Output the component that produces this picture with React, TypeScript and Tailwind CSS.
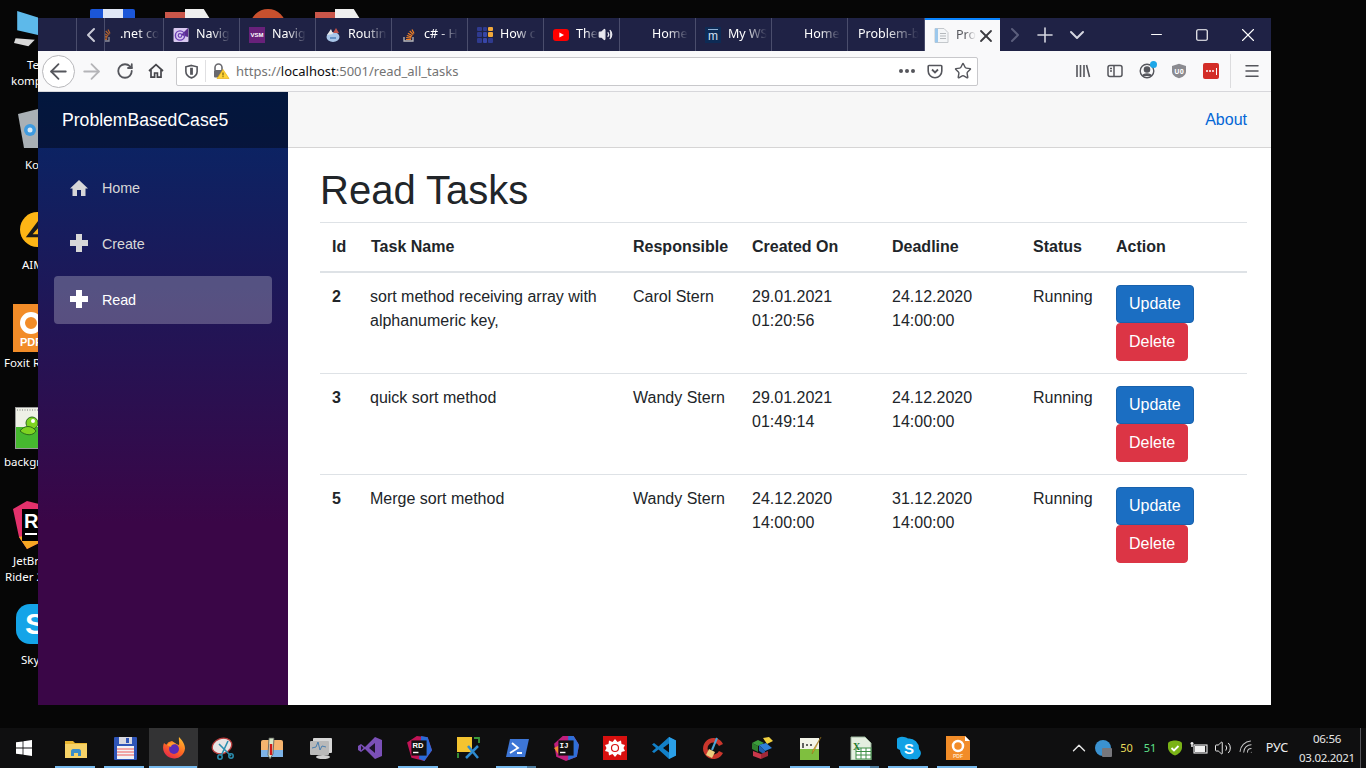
import React from 'react';
import { ArrowLeft, ArrowRight, RotateCw, ChevronLeft, ChevronRight, ChevronDown, ChevronUp, Plus, Minus, Square, X, Star, Menu, Volume2, Wifi } from 'lucide-react';

const UI_FONT = "font-['Noto_Sans','Open_Sans',sans-serif]";
const FADE = '[mask-image:linear-gradient(to_right,#000_45%,transparent)]';

const StackIcon = () => (
  <svg viewBox="0 0 16 16" className="w-4 h-4 shrink-0">
    <path d="M3 10v4h9v-4" fill="none" stroke="#bcbbbb" strokeWidth="1.3" />
    <path d="M5 12.5h5M5.2 10.5l5 .6M5.8 8.5l4.8 1.4M6.9 6.3l4.4 2.4M8.7 4l3.6 3.6M11 2.4l2 4.2" fill="none" stroke="#f48024" strokeWidth="1.2" />
  </svg>
);
const NavigIcon = () => (
  <svg viewBox="0 0 16 16" className="w-4 h-4">
    <rect x="0.5" y="1" width="15" height="14" rx="1" fill="#d9c9f0" />
    <path d="M15 1 L8 8 L15 10z" fill="#5c2d91" />
    <circle cx="7" cy="8.5" r="4.6" fill="none" stroke="#6b3fb4" strokeWidth="1.4" />
    <circle cx="7" cy="8.5" r="1.8" fill="none" stroke="#6b3fb4" strokeWidth="1.2" />
  </svg>
);
const VsmIcon = () => (
  <svg viewBox="0 0 16 16" className="w-4 h-4">
    <rect width="16" height="16" fill="#68217a" />
    <text x="8" y="10" textAnchor="middle" fontSize="6" fontWeight="700" fill="#fff" fontFamily="Liberation Sans">VSM</text>
  </svg>
);
const RoutingIcon = () => (
  <svg viewBox="0 0 16 16" className="w-4 h-4">
    <ellipse cx="8" cy="10" rx="6.5" ry="5" fill="#a9c6e8" />
    <path d="M2 8 L6 2 L8 7z" fill="#e8e8e8" />
    <path d="M8 6 L11 1 L14 6z" fill="#c0524a" />
    <path d="M5 11h6" stroke="#4f7fb8" strokeWidth="1.5" />
  </svg>
);
const GridIcon = () => (
  <div className="w-4 h-4 grid grid-cols-3 gap-px">
    {['#2f3a8f', '#2f3a8f', '#f2a93b', '#2f3a8f', '#3846a8', '#f2a93b', '#2f3a8f', '#3846a8', '#2f3a8f'].map((c, i) => (
      <div key={i} className="rounded-[1px]" style={{ backgroundColor: c }} />
    ))}
  </div>
);
const YoutubeIcon = () => (
  <svg viewBox="0 0 16 12" className="w-4 h-3">
    <rect width="16" height="12" rx="3" fill="#f00" />
    <path d="M6.4 3.4 L11 6 L6.4 8.6z" fill="#fff" />
  </svg>
);
const MIcon = () => (
  <svg viewBox="0 0 16 16" className="w-4 h-4">
    <rect width="16" height="16" fill="#0d2b55" />
    <rect x="3" y="2" width="10" height="1" fill="#8fb0d4" />
    <text x="8" y="13" textAnchor="middle" fontSize="12" fill="#cfe0f2" fontFamily="Liberation Sans">m</text>
  </svg>
);

const TABS: { width: string; icon?: React.ReactNode; pad?: string; text: string; audio?: boolean }[] = [
  { width: 'w-[76px]', icon: <NavigIcon />, text: 'Navig' },
  { width: 'w-[76px]', icon: <VsmIcon />, text: 'Navig' },
  { width: 'w-[76px]', icon: <RoutingIcon />, text: 'Routin' },
  { width: 'w-[76px]', icon: <StackIcon />, text: 'c# - H' },
  { width: 'w-[76px]', icon: <GridIcon />, text: 'How c' },
  { width: 'w-[76px]', icon: <YoutubeIcon />, text: 'The', audio: true },
  { width: 'w-[76px]', text: 'Home', pad: 'pl-[32px]' },
  { width: 'w-[76px]', icon: <MIcon />, text: 'My WS' },
  { width: 'w-[76px]', text: 'Home', pad: 'pl-[32px]' },
  { width: 'w-[77px]', text: 'Problem-b', pad: 'pl-[10px]' },
];

function TabStrip() {
  return (
    <div className={`h-[33px] bg-[#1f2245] flex text-[12.5px] text-white ${UI_FONT}`}>
      <div className="w-[39px] border-r border-[#4a4d6c]" />
      <div className="w-[28px] border-r border-[#4a4d6c] flex items-center justify-center">
        <ChevronLeft className="w-[24px] h-[24px] text-[#c9cad6]" strokeWidth={2} />
      </div>
      <div className="w-[59px] border-r border-[#4a4d6c] flex items-center overflow-hidden">
        <div className="w-[8px] shrink-0 flex justify-end overflow-hidden opacity-70"><StackIcon /></div>
        <span className={`ml-[7px] whitespace-nowrap ${FADE}`}>.net co</span>
      </div>
      {TABS.map((tab, i) => (
        <div key={i} className={`${tab.width} shrink-0 border-r border-[#4a4d6c] flex items-center ${tab.pad ?? 'pl-[9px]'} pr-[8px]`}>
          {tab.icon && <div className="w-4 h-4 shrink-0 flex items-center justify-center mr-[7px]">{tab.icon}</div>}
          <span className={`whitespace-nowrap ${FADE}`}>{tab.text}</span>
          {tab.audio && <Volume2 className="w-[15px] h-[15px] ml-auto -mr-[1px] text-[#e8e8ee] fill-[#e8e8ee] shrink-0" />}
        </div>
      ))}
      <div className="w-[75px] bg-[#f9f9fa] flex items-center pl-[9px] border-t-2 border-[#0a84ff] text-[#55565c]">
        <svg viewBox="0 0 16 16" className="w-4 h-[17px] shrink-0">
          <path d="M1 1h9l4 4v10H1z" fill="#f4f6f8" stroke="#c4c8cc" />
          <rect x="1" y="1" width="3" height="14" fill="#9cc8ec" />
          <path d="M6 6h6M6 8.5h6M6 11h6" stroke="#b5b9bd" />
        </svg>
        <span className={`ml-[6px] whitespace-nowrap ${FADE}`}>Pro</span>
        <X className="w-[20px] h-[20px] ml-auto mr-[7px] text-[#3b3b40] shrink-0" strokeWidth={2.2} />
      </div>
      <div className="w-[30px] flex items-center justify-center">
        <ChevronRight className="w-[24px] h-[24px] text-[#5b5e7c]" strokeWidth={2} />
      </div>
      <div className="w-[30px] flex items-center justify-center">
        <Plus className="w-[24px] h-[24px] text-[#d5d6e0]" strokeWidth={1.6} />
      </div>
      <div className="w-[34px] flex items-center justify-center">
        <ChevronDown className="w-[24px] h-[24px] text-[#d5d6e0]" strokeWidth={2} />
      </div>
      <div className="flex-1 flex items-center justify-end text-white">
        <div className="w-[46px] flex justify-center"><Minus className="w-[17px] h-[17px]" strokeWidth={1.4} /></div>
        <div className="w-[46px] flex justify-center"><Square className="w-[14px] h-[14px]" strokeWidth={2} /></div>
        <div className="w-[46px] flex justify-center"><X className="w-[22px] h-[22px]" strokeWidth={1.2} /></div>
      </div>
    </div>
  );
}

function Toolbar() {
  return (
    <div className={`h-[41px] bg-[#f9f9fa] border-b border-[#d7d7db] flex items-center pl-[4px] pr-[3px] text-[#55565c] ${UI_FONT}`}>
      <div className="w-[33px] h-[33px] rounded-full bg-white border border-[#b8b8bb] flex items-center justify-center">
        <ArrowLeft className="w-[25px] h-[25px] shrink-0" strokeWidth={1.7} />
      </div>
      <div className="w-[33px] flex justify-center"><ArrowRight className="w-[25px] h-[25px] text-[#b4b4b7]" strokeWidth={1.7} /></div>
      <div className="w-[33px] flex justify-center"><RotateCw className="w-[18px] h-[18px]" strokeWidth={2.4} /></div>
      <div className="w-[29px] flex justify-center">
        <svg viewBox="0 0 16 16" className="w-4 h-4" fill="none" stroke="#45454a" strokeWidth="1.7"><path d="M1 8 L8 1.6 L15 8M3 7v7.2h3.6V10h2.8v4.2H13V7" /></svg>
      </div>
      <div className="ml-[6px] w-[802px] shrink-0 h-[29px] bg-white border border-[#c8c8cb] rounded-[2px] flex items-center">
        <div className="w-[28px] flex justify-center">
          <svg viewBox="0 0 16 16" className="w-[15px] h-[15px]" fill="none" stroke="#55565c" strokeWidth="1.7"><path d="M8 1.5 L14 3v5c0 3.5-3 5.8-6 6.8C5 13.8 2 11.5 2 8V3z" /><path d="M8 4v7.5" strokeWidth="3" /></svg>
        </div>
        <div className="w-px h-[22px] bg-[#e0e0e2]" />
        <div className="w-[30px] flex justify-center">
          <svg viewBox="0 0 18 18" className="w-[18px] h-[18px]">
            <path d="M3 8V5.5a3.5 3.5 0 017 0V8" fill="none" stroke="#6a6a6f" strokeWidth="1.6" />
            <rect x="2" y="8" width="9" height="7.5" rx="1" fill="#6a6a6f" />
            <path d="M11 7.5 L17 16.5 H5z" fill="#ffd43a" stroke="#e2a500" strokeWidth="0.6" />
            <path d="M11 10.5v3M11 14.200v1" stroke="#5c4a00" strokeWidth="1" />
          </svg>
        </div>
        <div className="text-[13px] pt-px whitespace-nowrap text-[#737373] flex-1">https://<span className="text-[#0c0c0d]">localhost</span>:5001/read_all_tasks</div>
        <div className="flex items-center gap-[2px] mr-[6px]">
          <span className="w-[4px] h-[4px] rounded-full bg-[#55565c]" />
          <span className="w-[4px] h-[4px] rounded-full bg-[#55565c]" />
          <span className="w-[4px] h-[4px] rounded-full bg-[#55565c]" />
        </div>
        <div className="w-[28px] flex justify-center">
          <svg viewBox="0 0 16 16" className="w-4 h-4" fill="none" stroke="#55565c" strokeWidth="1.6"><path d="M2 2.5h12a.8.8 0 01.8.8V8a6.8 6.8 0 01-13.6 0V3.3a.8.8 0 01.8-.8z" /><path d="M5 6.5l3 3 3-3" strokeWidth="1.8" /></svg>
        </div>
        <div className="w-[28px] flex justify-center"><Star className="w-[18px] h-[18px]" strokeWidth={1.9} /></div>
      </div>
      <div className="ml-[89px] w-[32px] flex justify-center">
        <svg viewBox="0 0 16 16" className="w-4 h-4" fill="none" stroke="#55565c" strokeWidth="1.6"><path d="M2 2v12M5.5 2v12M9 2v12M11.5 2l3 12" /></svg>
      </div>
      <div className="w-[32px] flex justify-center">
        <svg viewBox="0 0 16 16" className="w-4 h-4" fill="none" stroke="#55565c" strokeWidth="1.5"><rect x="1" y="2.5" width="14" height="11" rx="2" /><path d="M7 2.5v11M3 5.5h2M3 8h2" /></svg>
      </div>
      <div className="w-[32px] flex justify-center relative">
        <svg viewBox="0 0 16 16" className="w-4 h-4" fill="none" stroke="#55565c" strokeWidth="1.4"><circle cx="8" cy="8" r="6.8" /><circle cx="8" cy="6.5" r="2.6" fill="#55565c" /><path d="M3.5 13c1-2.8 8-2.8 9 0" fill="#55565c" /></svg>
        <span className="absolute -top-[2px] left-[19px] w-[7px] h-[7px] rounded-full bg-[#1ea7e8]" />
      </div>
      <div className="w-[32px] flex justify-center">
        <svg viewBox="0 0 16 16" className="w-4 h-4"><path d="M8 .8 L15 3v5.5c0 3.6-3.5 5.8-7 6.8-3.5-1-7-3.2-7-6.8V3z" fill="#8b8b90" /><text x="8" y="10.5" textAnchor="middle" fontSize="7" fontWeight="700" fill="#fff">U0</text></svg>
      </div>
      <div className="w-[32px] flex justify-center">
        <div className="w-4 h-4 rounded-[2px] bg-[#d32d27] flex items-center justify-center gap-[1px]">
          <span className="w-[2px] h-[2px] bg-white rounded-full" /><span className="w-[2px] h-[2px] bg-white rounded-full" /><span className="w-[2px] h-[2px] bg-white rounded-full" /><span className="w-px h-[7px] bg-white ml-[1px]" />
        </div>
      </div>
      <div className="ml-[3px] w-px h-[34px] bg-[#dcdcde]" />
      <div className="ml-[5px] w-[32px] flex justify-center"><Menu className="w-[18px] h-[18px]" strokeWidth={2} /></div>
    </div>
  );
}

const SIDE_ITEMS = [
  { label: 'Home', home: true, active: false },
  { label: 'Create', home: false, active: false },
  { label: 'Read', home: false, active: true },
];

function Sidebar() {
  return (
    <aside className="w-[250px] shrink-0 bg-[linear-gradient(180deg,#052767_0%,#3a0647_70%)]">
      <div className="h-[56px] bg-black/40 flex items-center pl-[24px] text-[17.6px] text-white">ProblemBasedCase5</div>
      <nav className="px-[16px] pt-[16px] flex flex-col gap-[8px]">
        {SIDE_ITEMS.map((item) => (
          <div key={item.label} className={`h-[48px] rounded-[4px] flex items-center pl-[16px] text-[14.4px] tracking-[-0.1px] ${item.active ? 'bg-white/25 text-white' : 'text-[#d7d7d7]'}`}>
            <div className="w-[32px]">
              {item.home ? (
                <svg viewBox="0 0 18 18" className="w-[18px] h-[18px] -mt-[1px]" fill={item.active ? '#fff' : '#d7d7d7'}><path d="M9 1 L18 9.5 H15.5 V17 H11 V11 H7 V17 H2.5 V9.5 H0z" /></svg>
              ) : (
                <svg viewBox="0 0 18 18" className="w-[18px] h-[18px] -mt-[3px]" fill={item.active ? '#fff' : '#d7d7d7'}><path d="M6 0 H12 V6 H18 V12 H12 V18 H6 V12 H0 V6 H6z" /></svg>
              )}
            </div>
            <span className="pt-[1px]">{item.label}</span>
          </div>
        ))}
      </nav>
    </aside>
  );
}

const ROWS = [
  { id: 2, name: 'sort method receiving array with alphanumeric key,', who: 'Carol Stern', created: ['29.01.2021', '01:20:56'], deadline: ['24.12.2020', '14:00:00'] },
  { id: 3, name: 'quick sort method', who: 'Wandy Stern', created: ['29.01.2021', '01:49:14'], deadline: ['24.12.2020', '14:00:00'] },
  { id: 5, name: 'Merge sort method', who: 'Wandy Stern', created: ['24.12.2020', '14:00:00'], deadline: ['31.12.2020', '14:00:00'] },
];

function TasksTable() {
  return (
    <table className="w-[927px] table-fixed border-collapse text-left text-[16px] leading-[24px] text-[#212529]">
      <colgroup>
        <col className="w-[38px]" />
        <col className="w-[263px]" />
        <col className="w-[119px]" />
        <col className="w-[140px]" />
        <col className="w-[141px]" />
        <col className="w-[83px]" />
        <col className="w-[143px]" />
      </colgroup>
      <thead>
        <tr className="border-t border-b-2 border-[#dee2e6]">
          {['Id', 'Task Name', 'Responsible', 'Created On', 'Deadline', 'Status', 'Action'].map((h) => (
            <th key={h} className={`p-[12px] font-bold whitespace-nowrap ${h === 'Task Name' ? 'pl-[13px]' : ''}`}>{h}</th>
          ))}
        </tr>
      </thead>
      <tbody>
        {ROWS.map((row) => (
          <tr key={row.id} className="border-t border-[#dee2e6] align-top first:border-t-0">
            <td className="p-[12px] font-bold">{row.id}</td>
            <td className="p-[12px]">{row.name}</td>
            <td className="p-[12px] whitespace-nowrap">{row.who}</td>
            <td className="p-[12px]">{row.created[0]}<br />{row.created[1]}</td>
            <td className="p-[12px]">{row.deadline[0]}<br />{row.deadline[1]}</td>
            <td className="p-[12px]">Running</td>
            <td className="p-[12px]">
              <div className="flex flex-col items-start">
                <button className="h-[38px] px-[12px] rounded-[4px] bg-[#1b6ec2] border border-[#1861ac] text-white">Update</button>
                <button className="h-[38px] px-[12px] rounded-[4px] bg-[#dc3545] border border-[#dc3545] text-white">Delete</button>
              </div>
            </td>
          </tr>
        ))}
      </tbody>
    </table>
  );
}

function BrowserWindow() {
  return (
    <div className="absolute left-[38px] top-[18px] w-[1233px] h-[687px] flex flex-col bg-white">
      <TabStrip />
      <Toolbar />
      <div className="flex-1 flex font-['Liberation_Sans',Arial,sans-serif] min-h-0">
        <Sidebar />
        <main className="flex-1 min-w-0">
          <div className="h-[56px] bg-[#f7f7f7] border-b border-[#d6d5d5] flex items-center justify-end pr-[24px]">
            <a className="text-[#0366d6] text-[16px]">About</a>
          </div>
          <div className="pl-[32px] pt-[18px]">
            <h1 className="text-[40px] leading-[48px] font-medium text-[#212529] mb-[8px]">Read Tasks</h1>
            <TasksTable />
          </div>
        </main>
      </div>
    </div>
  );
}

/* desktop shortcuts, most of each is hidden behind the browser window */
function DesktopIcons() {
  const label = `absolute text-white text-[11.5px] leading-[15px] whitespace-nowrap text-center ${UI_FONT}`;
  return (
    <>
      <svg viewBox="0 0 40 50" className="absolute left-[14px] top-[10px] w-[32px] h-[42px]">
        <path d="M4 0 L30 8 V30 L4 24z" fill="#5db9ea" /><path d="M2 34 L26 36 L18 44 L0 40z" fill="#d9d9d9" />
      </svg>
      <div className={`${label} left-[27px] top-[57px]`}>Te</div>
      <div className={`${label} left-[11px] top-[73px]`}>komp</div>
      <div className="absolute left-[90px] top-[9px] w-[45px] h-[12px] bg-[#1b56d8] rounded-[2px] flex justify-center"><div className="w-[20px] h-full bg-[#dfe6f5]" /></div>
      <div className="absolute left-[165px] top-[12px] w-[20px] h-[8px] bg-[#c9564a]" />
      <div className="absolute left-[185px] top-[9px] w-[25px] h-[10px] bg-[#eeeeee] [clip-path:polygon(0_0,75%_0,100%_100%,0_100%)]" />
      <div className="absolute left-[250px] top-[9px] w-[36px] h-[36px] rounded-full bg-[#c8502e]" />
      <div className="absolute left-[315px] top-[12px] w-[20px] h-[8px] bg-[#c9564a]" />
      <div className="absolute left-[335px] top-[9px] w-[25px] h-[10px] bg-[#eeeeee] [clip-path:polygon(0_0,75%_0,100%_100%,0_100%)]" />

      <svg viewBox="0 0 24 40" className="absolute left-[18px] top-[108px] w-[24px] h-[40px]">
        <path d="M0 6 L24 0 V40 H6z" fill="#a9b0b5" /><circle cx="12" cy="22" r="6" fill="#3f9be0" /><circle cx="12" cy="22" r="2.5" fill="#dbeaf6" />
      </svg>
      <div className={`${label} left-[25px] top-[157px]`}>Ko</div>
      <svg viewBox="0 0 36 36" className="absolute left-[20px] top-[212px] w-[35px] h-[35px]">
        <circle cx="18" cy="18" r="18" fill="#fdb515" />
        <path d="M17 6 L2 26 H26z" fill="#1a1a1a" transform="translate(4 0)" />
        <path d="M21 14 L13 23 H24z" fill="#fdb515" />
      </svg>
      <div className={`${label} left-[22px] top-[257px]`}>AIM</div>
      <div className="absolute left-[13px] top-[304px] w-[36px] h-[48px] bg-[#f28c28] flex flex-col items-center">
        <div className="w-[22px] h-[22px] rounded-full border-[5px] border-white mt-[8px]" />
        <span className="text-white font-bold text-[11px] leading-[13px] mt-[2px] font-['Liberation_Sans',sans-serif]">PDF</span>
      </div>
      <div className={`${label} left-[4px] top-[355px]`}>Foxit R</div>
      <svg viewBox="0 0 30 42" className="absolute left-[15px] top-[407px] w-[30px] h-[42px]">
        <rect x="0.5" y="0.5" width="29" height="41" fill="#eef0e6" stroke="#999" />
        <path d="M2 3h26" stroke="#777" strokeDasharray="1 1.5" />
        <rect x="1" y="20" width="28" height="21" fill="#46b82f" />
        <circle cx="17" cy="16" r="6" fill="#7ed321" stroke="#2c6b1a" />
        <circle cx="18" cy="14" r="2" fill="#fff" />
        <path d="M5 24c4-6 12-6 16 0-3 5-10 5-16 0z" fill="#7ed321" stroke="#2c6b1a" />
      </svg>
      <div className={`${label} left-[4px] top-[454px]`}>backgr</div>
      <svg viewBox="0 0 30 48" className="absolute left-[13px] top-[501px] w-[30px] h-[48px]">
        <path d="M0 8 L14 0 L30 4 V40 L14 48 L6 36z" fill="#e3316c" />
        <path d="M6 36 L14 48 L30 40 V30z" fill="#f5a623" />
        <rect x="9" y="8" width="21" height="32" fill="#000" />
        <rect x="12" y="32" width="12" height="2" fill="#fff" />
        <text x="11" y="27" fontSize="20" fontWeight="700" fill="#fff" fontFamily="Liberation Sans">R</text>
      </svg>
      <div className={`${label} left-[13px] top-[553px]`}>JetBr</div>
      <div className={`${label} left-[5px] top-[569px]`}>Rider 2</div>
      <div className="absolute left-[16px] top-[604px] w-[38px] h-[40px] rounded-[14px] bg-[#14a4e8] flex items-center justify-center">
        <span className="text-white font-bold text-[30px] leading-[30px] font-['Liberation_Sans',sans-serif]">S</span>
      </div>
      <div className={`${label} left-[21px] top-[652px]`}>Sky</div>
    </>
  );
}

/* taskbar app icons */
const TASK_ICONS: { id: string; running?: boolean; double?: boolean; active?: boolean; svg: React.ReactNode }[] = [
  { id: 'explorer', running: true, svg: (
    <svg viewBox="0 0 24 24" className="w-6 h-6"><path d="M1 5h8l2 2h12v4H1z" fill="#e8b530" /><path d="M1 8h22v14H1z" fill="#f6d267" /><path d="M7 20v-5c0-1 1-2 2-2h6c1 0 2 1 2 2v5h-3v-3h-4v3z" fill="#3b8ec9" /></svg>
  ) },
  { id: 'save', running: true, svg: (
    <svg viewBox="0 0 24 24" className="w-6 h-6"><rect x="1" y="1" width="23" height="23" rx="1" fill="#2f55b8" /><rect x="6" y="1" width="13" height="7" fill="#d8d8e0" /><rect x="13" y="2" width="3" height="5" fill="#2f55b8" /><rect x="4" y="10" width="17" height="13" fill="#f2f2f5" /><path d="M4 13h17M4 16h17M4 19h17" stroke="#ef8c8c" strokeWidth="1.5" /></svg>
  ) },
  { id: 'firefox', running: true, active: true, svg: (
    <svg viewBox="0 0 24 24" className="w-[24px] h-[24px]">
      <defs><linearGradient id="ffg" x1="0.8" y1="0" x2="0.2" y2="1"><stop offset="0" stopColor="#ffbd2e" /><stop offset="0.5" stopColor="#ff6b22" /><stop offset="1" stopColor="#e3224f" /></linearGradient></defs>
      <path d="M17 1c3 3 6 7 6 11.5A11 11 0 1 1 2 7c1 1 2 1.500 3 1.500C6 5.500 8 6 10 5c2 1 3 3 7 4 .5-3-.5-5 0-8z" fill="url(#ffg)" />
      <circle cx="12" cy="13" r="5" fill="#5a2bb5" />
      <path d="M5 9c3-3 7-3 9-1-3 0-5 1-5 3z" fill="#ff9b2e" />
    </svg>
  ) },
  { id: 'snip', svg: (
    <svg viewBox="0 0 24 24" className="w-6 h-6"><ellipse cx="11" cy="10" rx="10" ry="7.5" fill="#e9e4e4" stroke="#b63b3b" strokeWidth="1.3" transform="rotate(-20 11 10)" /><path d="M8 8 L20 20M17 5 L10 20" stroke="#2c8fb0" strokeWidth="1.6" /><circle cx="9" cy="21" r="2.2" fill="none" stroke="#2c8fb0" strokeWidth="1.5" /><circle cx="20" cy="20" r="2.2" fill="none" stroke="#2c8fb0" strokeWidth="1.5" /></svg>
  ) },
  { id: 'thermo', svg: (
    <svg viewBox="0 0 24 24" className="w-6 h-6"><rect x="1" y="4" width="22" height="17" rx="2" fill="#f6b46f" /><rect x="1" y="14" width="22" height="7" fill="#7eb3e6" /><path d="M9 2h5L13 18l-3 5-2-4z" fill="#d7e8c8" stroke="#555" strokeWidth="0.8" /><path d="M11 8v11" stroke="#d01818" strokeWidth="2.5" /></svg>
  ) },
  { id: 'monitor', svg: (
    <svg viewBox="0 0 24 24" className="w-6 h-6"><rect x="4" y="2" width="19" height="15" rx="1" fill="#d6d6d6" /><rect x="1" y="5" width="19" height="14" rx="1" fill="#b9b9b9" /><path d="M3 12l4-1 2-5 2 8 2-4 4 1" fill="none" stroke="#4a7fb0" strokeWidth="1" /><ellipse cx="14" cy="21" rx="7" ry="2" fill="#cfcfcf" /></svg>
  ) },
  { id: 'vs', svg: (
    <svg viewBox="0 0 24 24" className="w-6 h-6"><path d="M17 1 L24 4v16l-7 3-10-10-4 3-3-2V10l3-2 4 3z" fill="#7b50b8" /><path d="M17 7v10l-6-5z" fill="#1c1429" /><path d="M3 9.5v5l2.5-2.5z" fill="#1c1429" /></svg>
  ) },
  { id: 'rider', running: true, svg: (
    <svg viewBox="0 0 24 24" className="w-[26px] h-[26px]"><path d="M1 7 L10 1 L20 2 L24 14 L17 24 L5 21z" fill="#c21456" /><path d="M14 1 L20 2 L24 14 L17 24 L12 22z" fill="#2a6bd8" /><rect x="5" y="5" width="14" height="14" fill="#111" /><text x="6" y="12" fontSize="7" fontWeight="700" fill="#fff" fontFamily="Liberation Sans">RD</text><rect x="6.5" y="15.5" width="5" height="1.3" fill="#fff" /></svg>
  ) },
  { id: 'tools', svg: (
    <svg viewBox="0 0 24 24" className="w-6 h-6"><rect x="1" y="1" width="15" height="15" fill="#f4c430" /><path d="M18 2h5v5M2 22v-5" fill="none" stroke="#3a9a3a" strokeWidth="1.8" /><path d="M10 22 L22 10M12 10 L22 22" stroke="#2e8bd0" strokeWidth="2.5" /></svg>
  ) },
  { id: 'ps', running: true, double: true, svg: (
    <svg viewBox="0 0 24 24" className="w-6 h-6"><path d="M5 3h19l-4 18H1z" fill="#3d76d6" /><path d="M7 7l6 5-8 5M12 17h5" fill="none" stroke="#fff" strokeWidth="1.8" /></svg>
  ) },
  { id: 'idea', svg: (
    <svg viewBox="0 0 24 24" className="w-[26px] h-[26px]"><path d="M1 8 L9 1 L19 1 L24 9 L22 20 L12 24 L3 20z" fill="#c01f7d" /><path d="M14 1 L19 1 L24 9 L22 20 L14 23z" fill="#2f6fd8" /><path d="M1 12 L5 10 L5 18z" fill="#f28b30" /><rect x="5" y="5" width="14" height="14" fill="#111" /><text x="6" y="12" fontSize="7" fontWeight="700" fill="#fff" fontFamily="Liberation Mono">IJ</text><rect x="6.5" y="15.5" width="5" height="1.3" fill="#fff" /></svg>
  ) },
  { id: 'wolfram', svg: (
    <svg viewBox="0 0 24 24" className="w-6 h-6"><rect width="24" height="24" fill="#d8100f" /><path d="M12 3l2.5 3 3.5-1.5.5 3.5 3.5 1-1.5 3 1.5 3-3.5 1-.5 3.5-3.5-1.5L12 21l-2.5-3-3.5 1.5-.5-3.5-3.5-1 1.5-3-1.5-3 3.5-1 .5-3.5L9.5 6z" fill="#fff" /><circle cx="12" cy="12" r="3.5" fill="none" stroke="#d8100f" strokeWidth="1.2" /></svg>
  ) },
  { id: 'vscode', svg: (
    <svg viewBox="0 0 24 24" className="w-6 h-6"><path d="M17 1 L24 4.5v15L17 23 6.5 13.5 2 17 0 15.5 4 12 0 8.5 2 7l4.5 3.5z" fill="#1280c8" /><path d="M17 1 L24 4.5v15L17 23z" fill="#2ba0e8" /><path d="M17 7.5 L11 12l6 4.5z" fill="#0d0d0d" /></svg>
  ) },
  { id: 'ccleaner', svg: (
    <svg viewBox="0 0 24 24" className="w-6 h-6"><path d="M22 8A10.5 10.5 0 1 0 22 17l-4-2a6 6 0 1 1 0-5z" fill="#c9362c" /><path d="M16 2 L11 14" stroke="#4da6d8" strokeWidth="2" /><path d="M8 13l6 3-3 6-6-3z" fill="#efcf7e" /></svg>
  ) },
  { id: 'cubes', svg: (
    <svg viewBox="0 0 24 24" className="w-6 h-6"><path d="M2 7l6-3 6 3-6 3z" fill="#3c9c3c" /><path d="M2 7v6l6 3v-6z" fill="#2f7f2f" /><path d="M13 2l6-1 4 4-6 3z" fill="#f0d040" /><path d="M9 9l7-2 6 5-7 3z" fill="#2f7fd8" /><path d="M9 9v6l6 4v-4z" fill="#2060b0" /><path d="M3 15l8 3 0 5-8-3z" fill="#c8384a" /><path d="M11 18l7-3v5l-7 3z" fill="#a02838" /></svg>
  ) },
  { id: 'notepad', running: true, svg: (
    <svg viewBox="0 0 24 24" className="w-6 h-6"><rect x="1" y="2" width="19" height="22" fill="#f2f4e8" /><rect x="1" y="13" width="19" height="11" fill="#7fbf3f" /><path d="M4 7v5M7 9h2M11 9h2" stroke="#333" strokeWidth="1.5" /><path d="M22 1 L15 15 L13 18 L14 14z" fill="#e8b030" stroke="#8a6a1a" strokeWidth="0.5" /></svg>
  ) },
  { id: 'excel', running: true, double: true, svg: (
    <svg viewBox="0 0 24 24" className="w-6 h-6"><path d="M3 1h14l6 6v17H3z" fill="#e4efe0" stroke="#9bb59b" /><rect x="8" y="12" width="15" height="11" fill="#fff" stroke="#3f8f46" /><path d="M8 15.5h15M8 19h15M13 12v11M18 12v11" stroke="#3f8f46" /><text x="5" y="14" fontSize="10" fontWeight="700" fill="#1f7a2c" fontFamily="Liberation Serif">X</text></svg>
  ) },
  { id: 'skype', running: true, svg: (
    <svg viewBox="0 0 24 24" className="w-6 h-6"><path d="M7 1a6 6 0 0 1 4 1.5A10 10 0 0 1 22 13a6 6 0 0 1-6 10 10 10 0 0 1-13-9A6 6 0 0 1 7 1z" fill="#12a2e6" /><text x="12" y="18" textAnchor="middle" fontSize="15" fontWeight="700" fill="#fff" fontFamily="Liberation Sans">S</text></svg>
  ) },
  { id: 'foxit', running: true, svg: (
    <svg viewBox="0 0 24 24" className="w-6 h-6"><path d="M0 0h19l5 5v19H0z" fill="#f28c28" /><path d="M19 0l5 5h-5z" fill="#fff" /><circle cx="12" cy="10" r="5" fill="none" stroke="#fff" strokeWidth="2.5" /><text x="12" y="22" textAnchor="middle" fontSize="5" fontWeight="700" fill="#ffe2c2" fontFamily="Liberation Sans">PDF</text></svg>
  ) },
];

function Taskbar() {
  return (
    <div className={`h-[40px] bg-[#0f0f10] flex items-center text-white ${UI_FONT}`}>
      <div className="w-[48px] flex justify-center">
        <svg viewBox="0 0 16 16" className="w-4 h-4" fill="#fff"><path d="M0 2.3 L6.6 1.4v6.2H0zM7.4 1.3 L16 0v7.6H7.4zM0 8.400h6.600v6.200L0 13.700zM7.400 8.400H16V16l-8.600-1.300z" /></svg>
      </div>
      <div className="flex ml-[3px]">
        {TASK_ICONS.map((t) => (
          <div key={t.id} className={`relative w-[49px] h-[40px] flex items-center justify-center ${t.active ? 'bg-[#333334]' : ''}`}>
            {t.svg}
            {t.running && <div className={`absolute bottom-0 h-[2px] bg-[#76b9ed] ${t.active ? 'left-0 right-[1px]' : 'left-[4px] right-[5px]'}`} />}
            {t.double && <div className="absolute bottom-0 right-[5px] w-[9px] h-[2px] bg-[#4f7d9f]" />}
          </div>
        ))}
      </div>
      <div className="ml-auto flex items-center h-full text-[12px]">
        <div className="w-[24px] flex justify-center"><ChevronUp className="w-[22px] h-[22px] text-[#e8e8e8]" strokeWidth={1.5} /></div>
        <div className="w-[24px] flex justify-center">
          <div className="w-[16px] h-[16px] rounded-full bg-[#3b92d0] relative"><div className="absolute right-[-1px] bottom-[-1px] w-[10px] h-[9px] bg-[#77777c] rounded-[1px]" /></div>
        </div>
        <span className="text-[#e8dc5a] w-[23px] text-center text-[11px]">50</span>
        <span className="text-[#5ee08a] w-[24px] text-center text-[11px]">51</span>
        <div className="w-[25px] flex justify-center">
          <svg viewBox="0 0 16 16" className="w-4 h-4"><path d="M8 .5c3 0 7 1 7 3v4c0 4-4 7-7 8-3-1-7-4-7-8v-4c0-2 4-3 7-3z" fill="#7ab317" /><path d="M4.5 8l2.5 2.5 4.5-4.500" fill="none" stroke="#fff" strokeWidth="1.8" /></svg>
        </div>
        <div className="w-[24px] flex justify-center">
          <svg viewBox="0 0 18 14" className="w-[18px] h-[14px]" fill="none" stroke="#f2f2f2" strokeWidth="1.1"><rect x="4" y="4" width="13" height="8" /><rect x="5.5" y="5.5" width="9" height="5" fill="#f2f2f2" /><path d="M2 1v5M.5 2.500h3" strokeWidth="1.5" /></svg>
        </div>
        <div className="w-[23px] flex justify-center"><Volume2 className="w-[18px] h-[18px] text-[#efefef]" strokeWidth={1.3} /></div>
        <div className="w-[26px] flex justify-center"><Wifi className="w-[18px] h-[18px] text-[#c8c8c8] -rotate-45" strokeWidth={1.3} /></div>
        <span className="w-[34px] text-center text-[12.5px] text-[#eee]">РУС</span>
        <div className="w-[66px] text-center text-[11.5px] tracking-[-0.3px] leading-[19px] text-[#e8e8e8]">06:56<br />03.02.2021</div>
        <div className="w-px h-full bg-[#55555a]" />
        <div className="w-[5px]" />
      </div>
    </div>
  );
}

export default function App() {
  return (
    <div className="w-[1366px] h-[768px] overflow-hidden flex flex-col bg-[#060606]">
      <div className="relative flex-1">
        <DesktopIcons />
        <BrowserWindow />
      </div>
      <Taskbar />
    </div>
  );
}
